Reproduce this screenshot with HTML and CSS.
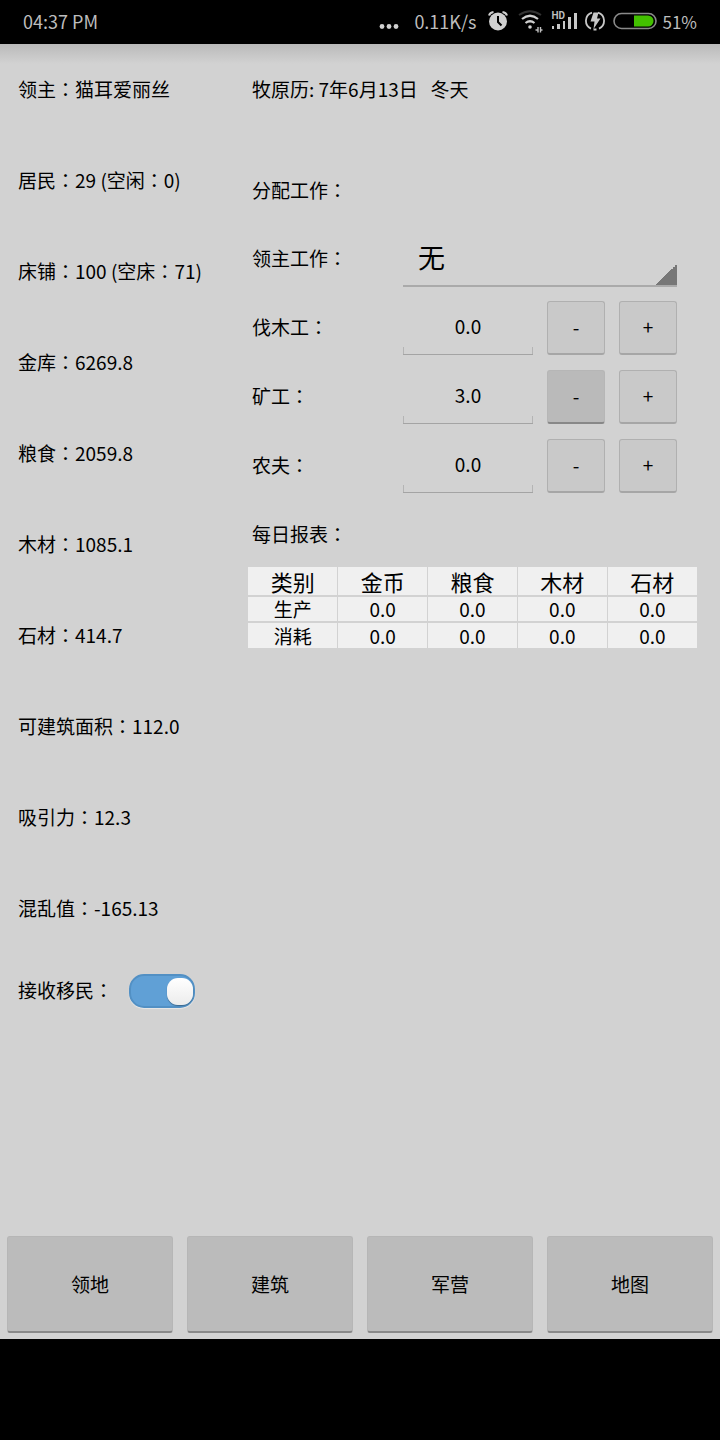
FILE: index.html
```html
<!DOCTYPE html>
<html lang="zh-CN">
<head>
  <meta charset="UTF-8">
  <meta name="viewport" content="width=device-width, initial-scale=1.0">
  <title>领地</title>
  <link rel="stylesheet" href="styles.css">
</head>
<body>

  <!-- Status bar -->
  <header class="status-bar">
    <span class="clock">04:37 PM</span>
    <svg class="dots" width="20" height="20" viewBox="0 0 20 20" fill="#d0d0d0">
      <circle cx="3" cy="15.500" r="2.400"/><circle cx="10" cy="15.500" r="2.400"/><circle cx="17" cy="15.500" r="2.400"/>
    </svg>
    <span class="speed">0.11K/s</span>
    <svg width="20" height="22" viewBox="0 0 20 22">
      <circle cx="10" cy="11.500" r="9" fill="#d0d0d0"/>
      <path d="M1 5.500Q2 2.500 5.500 2M19 5.500Q18 2.500 14.500 2" fill="none" stroke="#d0d0d0" stroke-width="2"/>
      <path d="M10 6v6l3.500 3.500" fill="none" stroke="#000" stroke-width="2"/>
    </svg>
    <svg width="27" height="26" viewBox="0 0 27 26" fill="none">
      <path d="M3 7Q14 -.500 25 7" stroke="#333" stroke-width="2"/>
      <path d="M6 11Q14 4.500 22 11M9.500 15Q14 11.500 18.500 15" stroke="#d0d0d0" stroke-width="2.200"/>
      <circle cx="14" cy="19" r="1.800" fill="#d0d0d0"/>
      <path d="M19.500 22h2.500M22 19v5.500M24.500 19v5.500M24.500 22h2" stroke="#c0c0c0" stroke-width="1.400"/>
    </svg>
    <span class="signal">
      <span class="hd">HD</span>
      <svg width="26" height="18" viewBox="0 0 26 18" fill="#c8c8c8">
        <path d="M1 14h2v3H1zM6 12h3v5H6zM12 9h2v8h-2zM17 5h3v12h-3zM23 1h3v16h-3z"/>
      </svg>
    </span>
    <svg width="20" height="20" viewBox="0 0 20 20">
      <path d="M7 1.700A8.500 8.500 0 0 0 6 17.600M13 1.700a8.500 8.500 0 0 1 1 15.900M8.500 18.500h3" fill="none" stroke="#c8c8c8" stroke-width="1.800"/>
      <path d="M8.500 1.500h5L12 7.500h3.500L8.500 18l1-7.500H5.500z" fill="#c8c8c8"/>
    </svg>
    <svg width="44" height="18" viewBox="0 0 44 18">
      <path d="M21 3.500h14a5.500 5.500 0 0 1 0 11H21z" fill="#43c000"/>
      <rect x="1" y="1.500" width="42" height="15" rx="7.500" fill="none" stroke="#8a8a8a" stroke-width="1.600"/>
    </svg>
    <span class="battery">51%</span>
  </header>

  <main class="screen">
    <div class="panels">

      <!-- Territory stats -->
      <section class="stats">
        <p>领主<span class="colon" lang="zh-TW">：</span>猫耳爱丽丝</p>
        <p>居民<span class="colon" lang="zh-TW">：</span>29 (空闲<span class="colon" lang="zh-TW">：</span>0)</p>
        <p>床铺<span class="colon" lang="zh-TW">：</span>100 (空床<span class="colon" lang="zh-TW">：</span>71)</p>
        <p>金库<span class="colon" lang="zh-TW">：</span>6269.8</p>
        <p>粮食<span class="colon" lang="zh-TW">：</span>2059.8</p>
        <p>木材<span class="colon" lang="zh-TW">：</span>1085.1</p>
        <p>石材<span class="colon" lang="zh-TW">：</span>414.7</p>
        <p>可建筑面积<span class="colon" lang="zh-TW">：</span>112.0</p>
        <p>吸引力<span class="colon" lang="zh-TW">：</span>12.3</p>
        <p>混乱值<span class="colon" lang="zh-TW">：</span>-165.13</p>
        <div class="switch-row">
          <label for="immigrants">接收移民<span class="colon" lang="zh-TW">：</span></label>
          <input type="checkbox" id="immigrants" class="switch" checked>
        </div>
      </section>

      <section class="work">
        <p class="date">牧原历: 7年6月13日 &nbsp; 冬天</p>
        <h2 class="assign-title">分配工作<span class="colon" lang="zh-TW">：</span></h2>

        <!-- Job assignment -->
        <div class="job">
          <label for="lord">领主工作<span class="colon" lang="zh-TW">：</span></label>
          <select id="lord" class="spinner">
            <option>无</option>
          </select>
        </div>
        <div class="job">
          <label for="woodcutter">伐木工<span class="colon" lang="zh-TW">：</span></label>
          <input type="text" id="woodcutter" class="amount" value="0.0">
          <button type="button" class="step">-</button>
          <button type="button" class="step">+</button>
        </div>
        <div class="job">
          <label for="miner">矿工<span class="colon" lang="zh-TW">：</span></label>
          <input type="text" id="miner" class="amount" value="3.0">
          <button type="button" class="step active">-</button>
          <button type="button" class="step">+</button>
        </div>
        <div class="job">
          <label for="farmer">农夫<span class="colon" lang="zh-TW">：</span></label>
          <input type="text" id="farmer" class="amount" value="0.0">
          <button type="button" class="step">-</button>
          <button type="button" class="step">+</button>
        </div>

        <!-- Daily report -->
        <h2 class="report-title">每日报表<span class="colon" lang="zh-TW">：</span></h2>
        <table class="report">
          <thead>
            <tr><th>类别</th><th>金币</th><th>粮食</th><th>木材</th><th>石材</th></tr>
          </thead>
          <tbody>
            <tr><td>生产</td><td>0.0</td><td>0.0</td><td>0.0</td><td>0.0</td></tr>
            <tr><td>消耗</td><td>0.0</td><td>0.0</td><td>0.0</td><td>0.0</td></tr>
          </tbody>
        </table>
      </section>
    </div>

    <nav class="tabs">
      <button type="button">领地</button>
      <button type="button">建筑</button>
      <button type="button">军营</button>
      <button type="button">地图</button>
    </nav>
  </main>

  <footer class="system-bar"></footer>

</body>
</html>
```

FILE: styles.css
```css
/* General Styling */
* {
  box-sizing: border-box;
}

body {
  font-family: "Noto Sans CJK SC", sans-serif;
  font-size: 19px;
  color: #000;
  background-color: #000;
  margin: 0;
  min-height: 100vh;
  display: flex;
  flex-direction: column;
}

p, h2 {
  margin: 0;
  font-size: 19px;
  font-weight: normal;
}

button, input, select {
  font-family: inherit;
  font-size: 19px;
  color: #000;
  margin: 0;
}

/* full-width colon sits in the middle of its cell */
.colon {
  font-family: "Noto Sans CJK TC", sans-serif;
}

/* Status Bar */
.status-bar {
  height: 44px;
  padding: 0 23px 2px;
  display: flex;
  align-items: center;
  gap: 8px;
  font-size: 18px;
  color: #bdbdbd;
}

.status-bar svg {
  display: block;
  flex: none;
}

.clock {
  margin-right: auto;
}

.speed {
  margin: 0 4px 0 7px;
}

.signal {
  display: flex;
  flex-direction: column;
}

.hd {
  font-family: Roboto, sans-serif;
  font-size: 10px;
  font-weight: bold;
  line-height: 8px;
  margin-bottom: -8px;
}

.battery {
  font-size: 17px;
  margin-left: -3px;
}

/* Screen */
.screen {
  flex: 1;
  display: flex;
  flex-direction: column;
  justify-content: space-between;
  background: linear-gradient(#bababa, #d2d2d2 20px);
}

.panels {
  display: grid;
  grid-template-columns: 248px minmax(0, 1fr);
}

.stats {
  padding-left: 18px;
  white-space: nowrap;
}

.stats p, .date {
  line-height: 89px;
  padding-bottom: 2px;
}

.switch-row {
  height: 74px;
  display: flex;
  align-items: center;
  gap: 16px;
}

.switch-row label {
  padding-bottom: 4px;
}

.switch {
  appearance: none;
  width: 66px;
  height: 34px;
  padding: 3px 0;
  border: 2px solid #5290c4;
  border-radius: 15px;
  background-color: #60a0d6;
  display: flex;
  justify-content: flex-end;
  box-shadow: 0 1px 1px #e8e8e8;
}

.switch::before {
  content: "";
  width: 26px;
  height: 27px;
  margin-top: -1px;
  border-radius: 11px;
  background: linear-gradient(#fff, #ececec);
  box-shadow: 0 1px 1px #3d688c;
}

.switch:not(:checked) {
  justify-content: flex-start;
  background-color: #bbb;
  border-color: #aaa;
}

/* Jobs */
.date, .assign-title, .report-title {
  padding-left: 4px;
}

.assign-title {
  padding-top: 21px;
  line-height: 68px;
}

.job {
  height: 69px;
  padding: 0 43px 0 4px;
  display: flex;
  align-items: center;
  gap: 14px;
}

.job label {
  flex: 0 0 137px;
  padding-bottom: 2px;
}

.spinner {
  appearance: none;
  flex: 1;
  min-width: 0;
  height: 56px;
  padding: 0 0 2px 15px;
  border: none;
  border-bottom: 2px solid #aaa;
  border-radius: 0;
  font-size: 27px;
  background: linear-gradient(135deg, transparent 50%, #777 50%) right bottom / 23px 23px no-repeat border-box;
}

.amount {
  flex: 1;
  min-width: 0;
  height: 54px;
  padding: 0 0 4px;
  border: none;
  text-align: center;
  background:
    linear-gradient(#a4a4a4, #a4a4a4) left bottom / 100% 1px no-repeat,
    linear-gradient(#b4b4b4, #b4b4b4) left bottom / 1px 8px no-repeat,
    linear-gradient(#b4b4b4, #b4b4b4) right bottom / 1px 8px no-repeat;
}

.step {
  flex: 0 0 58px;
  height: 54px;
  padding: 0 0 2px;
  border: 1px solid #b0b0b0;
  border-bottom: 2px solid #a6a6a6;
  border-radius: 3px;
  background-color: #c9c9c9;
}

.step.active {
  border-color: #b6b6b6;
  border-bottom-color: #888;
  background-color: #bababa;
}

/* Report Table */
.report-title {
  line-height: 67px;
}

.report {
  width: calc(100% - 23px);
  table-layout: fixed;
  border-collapse: collapse;
  background-color: #f0f0f0;
}

.report th, .report td {
  height: 26px;
  padding: 0;
  text-align: center;
  line-height: 24px;
  border: 0 solid #d2d2d2;
}

.report th {
  height: 29px;
  font-size: 22px;
  font-weight: normal;
  line-height: 27px;
}

.report tr > * + * {
  border-left-width: 1px;
}

.report tbody tr > * {
  border-top-width: 2px;
}

/* Bottom Buttons */
.tabs {
  display: grid;
  grid-template-columns: repeat(4, 1fr);
  gap: 14px;
  padding: 0 7px 6px;
}

.tabs button {
  height: 97px;
  padding: 0 0 2px;
  border: 1px solid #b6b6b6;
  border-bottom: 2px solid #888;
  border-radius: 3px;
  background-color: #bbb;
}

.system-bar {
  height: 101px;
}
```
